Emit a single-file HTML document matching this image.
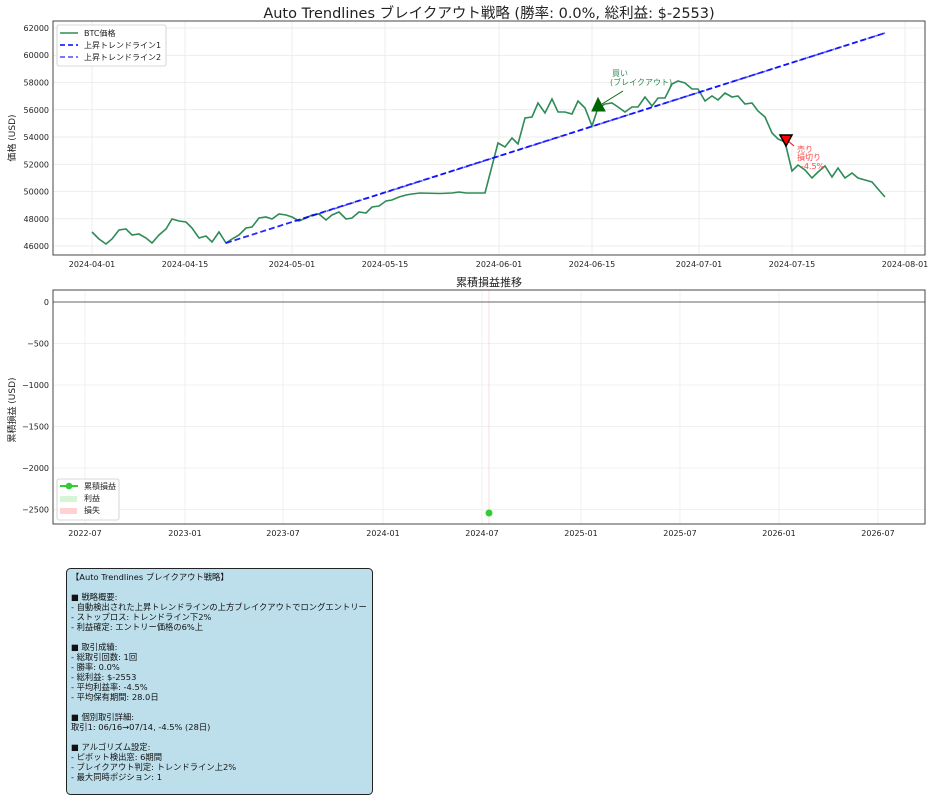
<!DOCTYPE html>
<html><head><meta charset="utf-8"><style>
body{margin:0;background:#fff;width:935px;height:800px;overflow:hidden}
svg{display:block;font-family:"DejaVu Sans","Noto Sans CJK JP",sans-serif}
</style></head><body>
<svg width="935" height="800" viewBox="0 0 935 800" xmlns="http://www.w3.org/2000/svg">
<rect width="935" height="800" fill="#fff"/>
<text x="489" y="18" font-size="14.5" text-anchor="middle" fill="#222">Auto Trendlines ブレイクアウト戦略 (勝率: 0.0%, 総利益: $-2553)</text>
<!-- top grid -->
<g stroke="#e8e8e8" stroke-width="0.8">
<line x1="92" y1="21" x2="92" y2="255"/><line x1="185" y1="21" x2="185" y2="255"/><line x1="292" y1="21" x2="292" y2="255"/><line x1="385" y1="21" x2="385" y2="255"/><line x1="499" y1="21" x2="499" y2="255"/><line x1="592" y1="21" x2="592" y2="255"/><line x1="699" y1="21" x2="699" y2="255"/><line x1="792" y1="21" x2="792" y2="255"/><line x1="905" y1="21" x2="905" y2="255"/>
<line x1="53" y1="28" x2="925" y2="28"/><line x1="53" y1="55.25" x2="925" y2="55.25"/><line x1="53" y1="82.5" x2="925" y2="82.5"/><line x1="53" y1="109.75" x2="925" y2="109.75"/><line x1="53" y1="137" x2="925" y2="137"/><line x1="53" y1="164.25" x2="925" y2="164.25"/><line x1="53" y1="191.5" x2="925" y2="191.5"/><line x1="53" y1="218.75" x2="925" y2="218.75"/><line x1="53" y1="246" x2="925" y2="246"/>
</g>
<g font-size="8" fill="#222" text-anchor="end">
<text x="49" y="31">62000</text><text x="49" y="58">60000</text><text x="49" y="85.5">58000</text><text x="49" y="113">56000</text><text x="49" y="140">54000</text><text x="49" y="167.5">52000</text><text x="49" y="194.5">50000</text><text x="49" y="222">48000</text><text x="49" y="249">46000</text>
</g>
<g font-size="8" fill="#222" text-anchor="middle">
<text x="92" y="267">2024-04-01</text><text x="185" y="267">2024-04-15</text><text x="292" y="267">2024-05-01</text><text x="385" y="267">2024-05-15</text><text x="499" y="267">2024-06-01</text><text x="592" y="267">2024-06-15</text><text x="699" y="267">2024-07-01</text><text x="792" y="267">2024-07-15</text><text x="905" y="267">2024-08-01</text>
</g>
<text transform="translate(15,138) rotate(-90)" font-size="9" text-anchor="middle" fill="#222">価格 (USD)</text>
<polyline fill="none" stroke="#2e8b57" stroke-width="1.6" points="92,232 99,239 106,244 112,239 119,230 126,229 132,235 139,234 146,238 152,243 159,235 166,229 172,219 179,221 186,222 192,228 199,238 206,236 212,242 219,232 226,243 232,239 239,235 246,228 252,227 259,218 266,217 272,219 279,214 286,215 292,217 299,221 306,218 312,215 319,214 326,220 332,215 339,212 346,219 352,218 359,212 366,213 372,207 379,206 386,201 392,200 399,197 406,195 412,194 420,193 440,193.5 452,193 459,192 466,193 485,193 498,143 505,147 512,138 518,144 525,118 532,117 538,103 545,113 552,99 558,112 565,112 572,114 578,101 585,108 592,126 598,108 605,104 612,103 618,107 625,112 632,107 638,107 645,97 652,106 658,98 665,98 672,84 678,81 685,83 692,89 698,89 705,101 712,96 718,100 725,93 732,97 738,96 745,104 752,103 758,111 765,117 772,133 778,139 785,142 792,171 798,165 805,170 812,178 818,172 825,166 832,177 838,168 845,178 852,173 858,178 865,180 872,182 878,189 885,197"/>
<line x1="226" y1="243" x2="885" y2="33" stroke="#0000ff" stroke-opacity="0.85" stroke-width="1.8" stroke-dasharray="6,3"/>
<line x1="296" y1="221" x2="885" y2="33" stroke="#0000ff" stroke-opacity="0.6" stroke-width="1.6" stroke-dasharray="5,3"/>
<!-- buy -->
<line x1="623" y1="91" x2="602" y2="104" stroke="#006400" stroke-width="1"/>
<polygon points="598,98 592,111 605,111" fill="#006400" stroke="#006400"/>
<text x="612" y="76" font-size="8" fill="#2e8b57">買い</text>
<text x="610" y="85" font-size="8" fill="#2e8b57">(ブレイクアウト)</text>
<!-- sell -->
<line x1="794" y1="146" x2="788" y2="141" stroke="#ff0000" stroke-width="1"/>
<polygon points="780,135 792,135 786,146" fill="#ff0000" stroke="#000" stroke-width="1.5"/>
<g font-size="8" fill="#ff4444"><text x="797" y="152">売り</text><text x="797" y="160">損切り</text><text x="801" y="169">-4.5%</text></g>
<rect x="53" y="21" width="872" height="234" fill="none" stroke="#333" stroke-width="0.9"/>
<!-- legend top -->
<rect x="57" y="25" width="109" height="41" rx="2" fill="#fff" fill-opacity="0.9" stroke="#ccc" stroke-width="0.8"/>
<line x1="60" y1="33" x2="78" y2="33" stroke="#2e8b57" stroke-width="1.6"/>
<line x1="60" y1="45" x2="78" y2="45" stroke="#0000ff" stroke-width="1.6" stroke-dasharray="5,3"/>
<line x1="60" y1="57" x2="78" y2="57" stroke="#0000ff" stroke-opacity="0.7" stroke-width="1.6" stroke-dasharray="5,3"/>
<g font-size="8" fill="#222"><text x="84" y="36">BTC価格</text><text x="84" y="48">上昇トレンドライン1</text><text x="84" y="60">上昇トレンドライン2</text></g>

<!-- bottom -->
<text x="489" y="286" font-size="11" text-anchor="middle" fill="#222">累積損益推移</text>
<g stroke="#ececec" stroke-width="0.8">
<line x1="85" y1="290" x2="85" y2="524"/><line x1="185" y1="290" x2="185" y2="524"/><line x1="283" y1="290" x2="283" y2="524"/><line x1="383" y1="290" x2="383" y2="524"/><line x1="482" y1="290" x2="482" y2="524"/><line x1="581" y1="290" x2="581" y2="524"/><line x1="680" y1="290" x2="680" y2="524"/><line x1="779" y1="290" x2="779" y2="524"/><line x1="878" y1="290" x2="878" y2="524"/>
<line x1="53" y1="343.5" x2="925" y2="343.5"/><line x1="53" y1="385" x2="925" y2="385"/><line x1="53" y1="426.5" x2="925" y2="426.5"/><line x1="53" y1="468" x2="925" y2="468"/><line x1="53" y1="509.5" x2="925" y2="509.5"/>
</g>
<line x1="489" y1="290" x2="489" y2="524" stroke="#ffd0d0" stroke-width="0.8"/>
<line x1="53" y1="302" x2="925" y2="302" stroke="#666" stroke-width="1"/>
<g font-size="8" fill="#222" text-anchor="end">
<text x="49" y="305">0</text><text x="49" y="346.5">−500</text><text x="49" y="388">−1000</text><text x="49" y="429.5">−1500</text><text x="49" y="471">−2000</text><text x="49" y="512.5">−2500</text>
</g>
<g font-size="8" fill="#222" text-anchor="middle">
<text x="85" y="536">2022-07</text><text x="185" y="536">2023-01</text><text x="283" y="536">2023-07</text><text x="383" y="536">2024-01</text><text x="482" y="536">2024-07</text><text x="581" y="536">2025-01</text><text x="680" y="536">2025-07</text><text x="779" y="536">2026-01</text><text x="878" y="536">2026-07</text>
</g>
<text transform="translate(15,410) rotate(-90)" font-size="9" text-anchor="middle" fill="#222">累積損益 (USD)</text>
<circle cx="489" cy="513" r="3.5" fill="#32cd32"/>
<rect x="53" y="290" width="872" height="234" fill="none" stroke="#333" stroke-width="0.9"/>
<rect x="57" y="479" width="62" height="41" rx="2" fill="#fff" stroke="#ccc" stroke-width="0.8"/>
<line x1="60" y1="486" x2="78" y2="486" stroke="#32cd32" stroke-width="2"/><circle cx="69" cy="486" r="3.3" fill="#32cd32"/>
<rect x="60" y="496" width="17" height="6" fill="#32cd32" fill-opacity="0.2"/>
<rect x="60" y="508" width="17" height="6" fill="#ff0000" fill-opacity="0.18"/>
<g font-size="8" fill="#222"><text x="84" y="489">累積損益</text><text x="84" y="501">利益</text><text x="84" y="513">損失</text></g>

<!-- text box -->
<rect x="66.5" y="568.5" width="306" height="226" rx="4" fill="#bddfeb" stroke="#222" stroke-width="1"/>
<g font-size="8.3" fill="#111">
<text x="71" y="580">【Auto Trendlines ブレイクアウト戦略】</text>
<text x="71" y="600">■ 戦略概要:</text>
<text x="71" y="610">  - 自動検出された上昇トレンドラインの上方ブレイクアウトでロングエントリー</text>
<text x="71" y="620">  - ストップロス: トレンドライン下2%</text>
<text x="71" y="630">  - 利益確定: エントリー価格の6%上</text>
<text x="71" y="650">■ 取引成績:</text>
<text x="71" y="660">  - 総取引回数: 1回</text>
<text x="71" y="670">  - 勝率: 0.0%</text>
<text x="71" y="680">  - 総利益: $-2553</text>
<text x="71" y="690">  - 平均利益率: -4.5%</text>
<text x="71" y="700">  - 平均保有期間: 28.0日</text>
<text x="71" y="720">■ 個別取引詳細:</text>
<text x="71" y="730">  取引1: 06/16→07/14, -4.5% (28日)</text>
<text x="71" y="750">■ アルゴリズム設定:</text>
<text x="71" y="760">  - ピボット検出窓: 6期間</text>
<text x="71" y="770">  - ブレイクアウト判定: トレンドライン上2%</text>
<text x="71" y="780">  - 最大同時ポジション: 1</text>
</g>
</svg>
</body></html>
